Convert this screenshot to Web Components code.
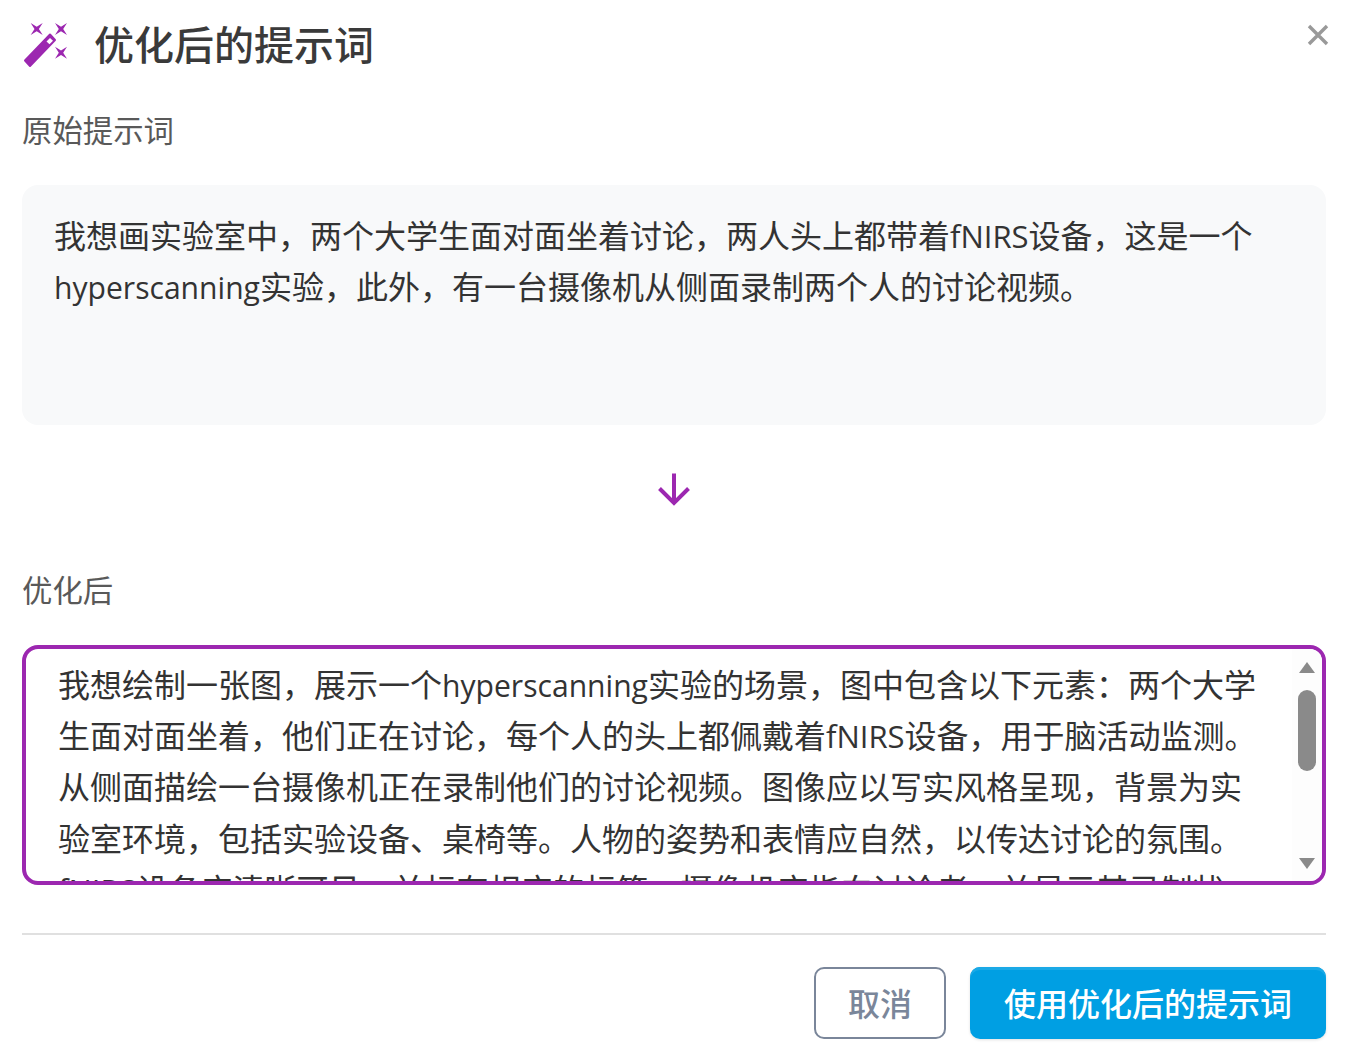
<!DOCTYPE html>
<html lang="zh">
<head>
<meta charset="utf-8">
<title>优化后的提示词</title>
<style>
  html, body { margin: 0; background: #fff; }
  body { font-family: "Open Sans", "Noto Sans CJK SC", sans-serif; }
  /* Open Sans runs a bit wider than the latin face in the reference */
  .term { font-size: 30.100px; line-height: 1; }
  .abbr { font-size: 31px; line-height: 1; }
</style>
</head>
<body>
<template id="tpl-dialog">
  <style>
    :host { display: flex; flex-direction: column; height: 1060px; box-sizing: border-box; padding: 0 41px 0 22px; position: relative; }
    ::slotted(prompt-divider) { margin-top: 48px; }
  </style>
  <slot></slot>
</template>

<template id="tpl-header">
  <style>
    :host { display: flex; align-items: center; height: 90px; gap: 25px; color: #3a3a3a; font-size: 40px; font-weight: 500; line-height: 90px; }
    svg { width: 48px; height: 47px; flex: none; fill: #9c27b0; margin-right: -1px; }
    .close { position: absolute; top: 24px; right: 38px; width: 22px; height: 22px; stroke: #999; stroke-width: 3.4; fill: none; margin: 0; }
  </style>
  <svg viewBox="0 0 48 47">
    <path stroke="#9c27b0" stroke-width="2" stroke-linejoin="round" d="M3 38.500 28 12.500 33 18 8 44Z"/>
    <path fill="#fff" d="M24.500 19.500 28 16 31 18.800 27.500 22.300Z"/>
    <path d="M8.700 1 14.700 4.800 20.700 1 16.900 7 20.700 13 14.700 9.200 8.700 13 12.500 7Z"/>
    <path d="M33 1 39 4.800 45 1 41.200 7 45 13 39 9.200 33 13 36.800 7Z"/>
    <path d="M33 24.700 39 28.500 45 24.700 41.200 30.700 45 36.700 39 32.900 33 36.700 36.800 30.700Z"/>
  </svg>
  <span><slot></slot></span>
  <svg class="close" viewBox="0 0 22 22"><path d="M2 2 20 20M20 2 2 20"/></svg>
</template>

<template id="tpl-label">
  <style>
    :host { display: block; color: #595959; font-size: 30.400px; line-height: 46px; margin: 18px 0 31px; }
  </style>
  <slot></slot>
</template>

<template id="tpl-source">
  <style>
    :host { display: block; box-sizing: border-box; height: 240px; background: #f8f9fa; border-radius: 16px; padding: 25px 32px; color: #333; font-size: 32px; line-height: 51.200px; }
  </style>
  <slot></slot>
</template>

<template id="tpl-arrow">
  <style>
    :host { display: flex; justify-content: center; align-items: flex-start; box-sizing: border-box; height: 125px; padding-top: 47px; }
    svg { width: 34px; height: 34px; fill: none; stroke: #9c27b0; stroke-width: 4; }
  </style>
  <svg viewBox="0 0 34 34"><path d="M17 1.500V31M2.500 16.500 17 31 31.500 16.500"/></svg>
</template>

<template id="tpl-result">
  <style>
    :host { display: flex; box-sizing: border-box; height: 240px; border: 4px solid #9c27b0; border-radius: 16px; overflow: hidden; color: #333; font-size: 32px; line-height: 51.200px; }
    .text { flex: 1; min-width: 0; overflow: hidden; padding: 10px 32px 0; }
  </style>
  <div class="text"><slot></slot></div>
  <prompt-scrollbar></prompt-scrollbar>
</template>

<template id="tpl-scrollbar">
  <style>
    :host { display: flex; flex-direction: column; align-items: center; width: 30px; flex: none; background: #fdfdfd; box-sizing: border-box; padding: 13px 0 12px; }
    .up, .down { width: 0; height: 0; border-left: 8px solid transparent; border-right: 8px solid transparent; }
    .up { border-bottom: 11px solid #8a8a8a; }
    .down { border-top: 11px solid #8a8a8a; margin-top: auto; }
    .thumb { width: 18px; height: 81px; background: #8a8a8a; border-radius: 9px; margin-top: 17px; }
  </style>
  <div class="up"></div><div class="thumb"></div><div class="down"></div>
</template>

<template id="tpl-divider">
  <style>
    :host { display: block; height: 2px; background: #e0e0e0; }
  </style>
</template>

<template id="tpl-actions">
  <style>
    :host { display: flex; justify-content: flex-end; gap: 24px; margin-top: 32px; }
  </style>
  <slot></slot>
</template>

<template id="tpl-button">
  <style>
    :host { display: flex; align-items: center; justify-content: center; box-sizing: border-box; height: 72px; padding: 0 34px 2px; border-radius: 10px; font-size: 32px; font-weight: 500; }
    :host([variant="ghost"]) { border: 2px solid #7a869a; color: #7a869a; background: #fff; width: 132px; padding: 0 0 3px; }
    :host([variant="primary"]) { background: #009fe3; color: #fff; box-shadow: inset 0 3px 0 #1aa9e6, 0 1px 3px rgba(0,0,0,.12); }
  </style>
  <slot></slot>
</template>

<prompt-dialog>
  <prompt-header>优化后的提示词</prompt-header>
  <prompt-label>原始提示词</prompt-label>
  <prompt-source>我想画实验室中，两个大学生面对面坐着讨论，两人头上都带着<span class="abbr">fNIRS</span>设备，这是一个<span class="term">hyperscanning</span>实验，此外，有一台摄像机从侧面录制两个人的讨论视频。</prompt-source>
  <prompt-arrow></prompt-arrow>
  <prompt-label>优化后</prompt-label>
  <prompt-result>我想绘制一张图，展示一个<span class="term">hyperscanning</span>实验的场景，图中包含以下元素：两个大学生面对面坐着，他们正在讨论，每个人的头上都佩戴着<span class="abbr">fNIRS</span>设备，用于脑活动监测。从侧面描绘一台摄像机正在录制他们的讨论视频。图像应以写实风格呈现，背景为实验室环境，包括实验设备、桌椅等。人物的姿势和表情应自然，以传达讨论的氛围。<span class="abbr">fNIRS</span>设备应清晰可见，并标有相应的标签。摄像机应指向讨论者，并显示其录制状态。</prompt-result>
  <prompt-divider></prompt-divider>
  <prompt-actions>
    <prompt-button variant="ghost">取消</prompt-button>
    <prompt-button variant="primary">使用优化后的提示词</prompt-button>
  </prompt-actions>
</prompt-dialog>

<script>
  // every element is the same: clone its template into an open shadow root
  const tags = ['dialog', 'header', 'label', 'source', 'arrow', 'result', 'scrollbar', 'divider', 'actions', 'button'];
  tags.forEach(name => {
    customElements.define(`prompt-${name}`, class extends HTMLElement {
      constructor() {
        super();
        const tpl = document.getElementById(`tpl-${name}`);
        this.attachShadow({ mode: 'open' }).appendChild(tpl.content.cloneNode(true));
      }
    });
  });
</script>
</body>
</html>
